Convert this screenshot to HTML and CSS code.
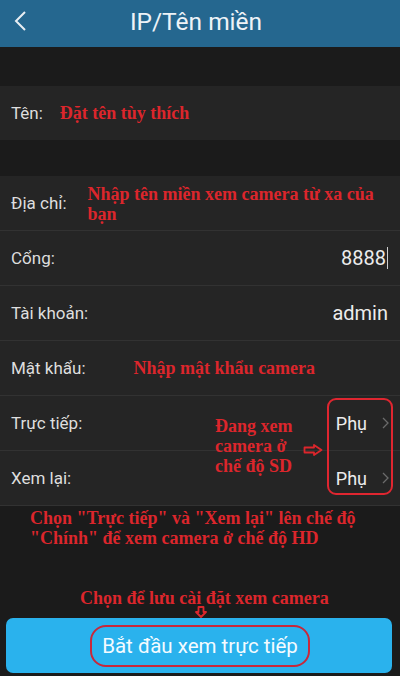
FILE: index.html
```html
<!DOCTYPE html>
<html lang="vi">
<head>
<meta charset="utf-8">
<link rel="stylesheet" href="styles.css">
</head>
<body>
<div class="screen">
  <header class="topbar">
    <span class="back">
      <svg width="16" height="24" viewBox="0 0 16 24"><polyline points="12,3 3,12 12,21" fill="none" stroke="#e8eef3" stroke-width="2"/></svg>
    </span>
    <h1 class="title">IP/Tên miền</h1>
    <span></span>
  </header>

  <div class="spacer-top"></div>

  <div class="row row-name">
    <span class="label">Tên:</span>
    <span class="note note-name">Đặt tên tùy thích</span>
  </div>

  <div class="spacer-mid"></div>

  <div class="row">
    <span class="label">Địa chỉ:</span>
    <span class="note note-addr">Nhập tên miền xem camera từ xa của bạn</span>
  </div>
  <div class="row">
    <span class="label">Cổng:</span>
    <span class="value">8888<span class="caret"></span></span>
  </div>
  <div class="row">
    <span class="label">Tài khoản:</span>
    <span class="value">admin</span>
  </div>
  <div class="row">
    <span class="label">Mật khẩu:</span>
    <span class="note note-pass">Nhập mật khẩu camera</span>
  </div>

  <div class="stream-group">
    <div class="row">
      <span class="label">Trực tiếp:</span>
      <span class="select">Phụ
        <svg width="9" height="14" viewBox="0 0 9 14"><polyline points="2,2 7,7 2,12" fill="none" stroke="#6b6b6b" stroke-width="1.3"/></svg>
      </span>
    </div>
    <div class="row">
      <span class="label">Xem lại:</span>
      <span class="select">Phụ
        <svg width="9" height="14" viewBox="0 0 9 14"><polyline points="2,2 7,7 2,12" fill="none" stroke="#6b6b6b" stroke-width="1.3"/></svg>
      </span>
    </div>
    <div class="sd-note">Đang xem<br>camera ở<br>chế độ SD</div>
    <svg class="right-arrow" width="20" height="12" viewBox="0 0 20 12"><path d="M1.5 3.5 H11 V1 L18.5 6 L11 11 V8.5 H1.5 Z" fill="none" stroke="#dc262c" stroke-width="1.8" stroke-linejoin="round"/></svg>
    <div class="red-box"></div>
  </div>

  <p class="note hd-note">Chọn "Trực tiếp" và "Xem lại" lên chế độ<br>"Chính" để xem camera ở chế độ HD</p>

  <p class="note save-note">Chọn để lưu cài đặt xem camera</p>
  <div class="down-arrow">
    <svg width="12" height="12" viewBox="0 0 12 12"><path d="M3.5 1 V6 H1 L6 11 L11 6 H8.5 V1 Z" fill="none" stroke="#dc262c" stroke-width="1.8" stroke-linejoin="round"/></svg>
  </div>

  <button class="start-btn"><span class="start-label">Bắt đầu xem trực tiếp</span></button>
</div>
</body>
</html>
```

FILE: styles.css
```css
html, body {
  margin: 0;
  padding: 0;
  background: #1b1b1b;
}
.screen {
  width: 400px;
  height: 676px;
  overflow: hidden;
  font-family: Roboto, "Noto Sans", sans-serif;
  background: #1b1b1b;
  display: flex;
  flex-direction: column;
}
.topbar {
  height: 47px;
  background: #25678f;
  display: grid;
  grid-template-columns: 44px 1fr 44px;
  align-items: center;
}
.back {
  display: flex;
  align-items: center;
  padding-left: 13px;
  padding-bottom: 6px;
}
.title {
  margin: 0;
  text-align: center;
  font-weight: 400;
  font-size: 24.5px;
  color: #eef3f7;
  padding: 0 8px 4px 0;
}
.spacer-top { height: 39px; flex: none; }
.spacer-mid { height: 36px; flex: none; }
.row {
  height: 54px;
  flex: none;
  background: #252525;
  border-bottom: 1px solid #323232;
  display: flex;
  align-items: center;
  padding: 0 12px 0 11px;
  box-sizing: content-box;
}
.row-name { border-bottom: none; }
.label {
  font-size: 17px;
  color: #dedede;
  flex: none;
}
.value {
  margin-left: auto;
  font-size: 20px;
  color: #ececec;
  display: flex;
  align-items: center;
}
.caret {
  display: inline-block;
  width: 1px;
  height: 22px;
  background: #cfcfcf;
  margin-left: 1px;
}
.note {
  font-family: "Liberation Serif", "Times New Roman", serif;
  font-weight: 700;
  color: #dc262c;
  font-size: 18px;
  line-height: 20px;
}
.note-name { margin-left: 17px; }
.note-addr { margin-left: 21px; padding-top: 2px; max-width: 292px; }
.note-pass { margin-left: 48px; }
.stream-group {
  position: relative;
  flex: none;
  display: flex;
  flex-direction: column;
}
.select {
  margin-left: auto;
  font-size: 18px;
  color: #ececec;
  display: flex;
  align-items: center;
  gap: 14px;
  margin-right: -2px;
}
.sd-note {
  position: absolute;
  left: 215px;
  top: 20px;
  font-family: "Liberation Serif", "Times New Roman", serif;
  font-weight: 700;
  color: #dc262c;
  font-size: 18px;
  line-height: 20px;
}
.right-arrow {
  position: absolute;
  left: 303px;
  top: 48px;
}
.red-box {
  position: absolute;
  left: 327px;
  top: 2px;
  width: 62px;
  height: 93px;
  border: 2px solid #df2630;
  border-radius: 9px;
}
.hd-note {
  margin: 2px 0 0 30px;
}
.save-note {
  margin: 40px 0 0 80px;
}
.down-arrow {
  display: flex;
  justify-content: center;
  padding-left: 2px;
  height: 12px;
  margin-top: -2px;
}
.start-btn {
  margin: 0 8px 0 6px;
  height: 55px;
  background: #2ab2ed;
  border: none;
  border-radius: 7px;
  display: flex;
  justify-content: center;
  align-items: center;
  padding: 0;
  padding-left: 2px;
  font-family: Roboto, "Noto Sans", sans-serif;
}
.start-label {
  font-size: 20.5px;
  color: #f4fbff;
  border: 2px solid #c8283a;
  border-radius: 16px;
  padding: 7px 10px;
}
```
